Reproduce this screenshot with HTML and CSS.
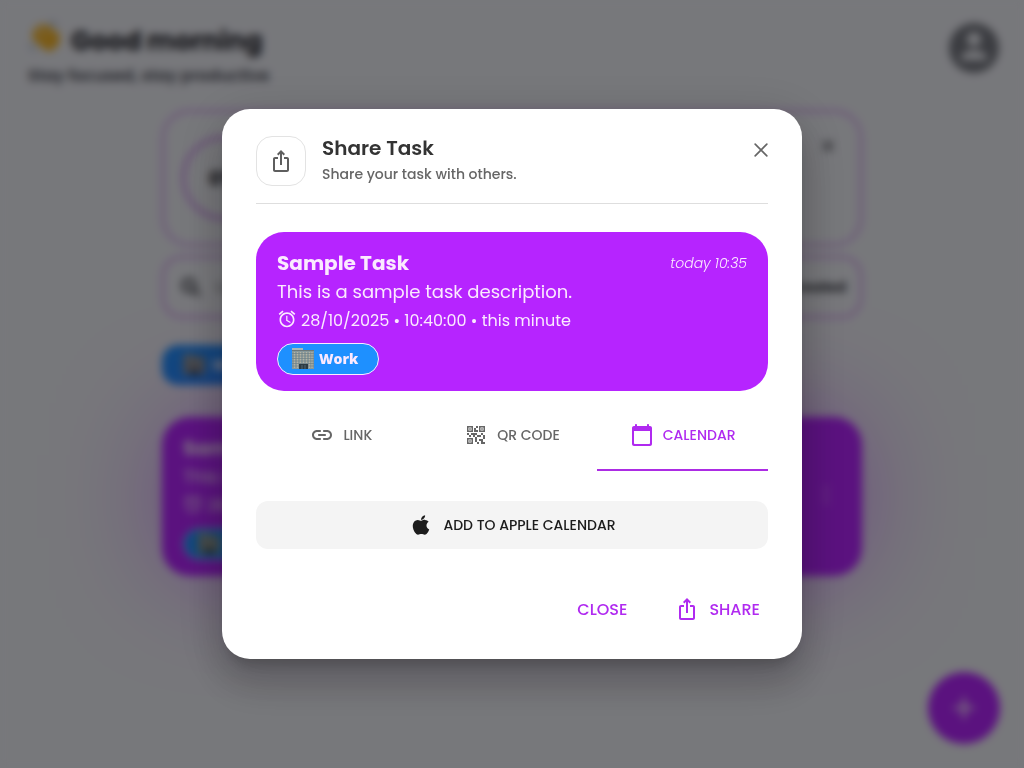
FILE: index.html
```html
<!DOCTYPE html>
<html lang="en">
<head>
<meta charset="utf-8">
<meta name="viewport" content="width=device-width, initial-scale=1">
<title>Share Task</title>
<link rel="stylesheet" href="styles.css">
</head>
<body>
<svg class="sprite" aria-hidden="true">
  <symbol id="i-share" viewBox="0 0 24 24"><path d="M16 5l-1.42 1.42-1.59-1.59V16h-1.98V4.83L9.42 6.42 8 5l4-4 4 4zm4 5v11c0 1.1-.9 2-2 2H6c-1.11 0-2-.9-2-2V10c0-1.11.89-2 2-2h3v2H6v11h12V10h-3V8h3c1.1 0 2 .89 2 2z"/></symbol>
  <symbol id="i-alarm" viewBox="0 0 24 24"><path d="M22 5.72l-4.6-3.86-1.29 1.53 4.6 3.86L22 5.72zM7.88 3.39L6.6 1.86 2 5.71l1.29 1.53 4.59-3.85zM12.5 8H11v6l4.75 2.85.75-1.23-4-2.37V8zM12 4c-4.97 0-9 4.03-9 9s4.02 9 9 9c4.97 0 9-4.03 9-9s-4.03-9-9-9zm0 16c-3.87 0-7-3.13-7-7s3.13-7 7-7 7 3.13 7 7-3.13 7-7 7z"/></symbol>
  <symbol id="i-office" viewBox="0 0 24 24">
    <path fill="#87989b" d="M1 3h22v19H1z"/>
    <path fill="#a9b8ba" d="M1 1h11v3H1z"/>
    <path fill="#6d7779" d="M1 3h22v1H1z"/>
    <path stroke="#b5b3a4" stroke-width="1.2" d="M3.500 5v16M6.500 5v16M9.500 5v11M12.500 5v11M15.500 5v11M18.500 5v16M21 5v16"/>
    <path stroke="#6f8085" stroke-width=".7" d="M1 6.500h22M1 9h22M1 11.500h22M1 14h22M1 16.500h22M1 19h22"/>
    <path fill="#2d3b42" d="M8 17h9v5H8z"/>
    <path stroke="#607d8b" stroke-width=".7" d="M11 18v4M14 18v4"/>
  </symbol>
</svg>

<div class="app">
  <header class="greeting">
    <div>
      <h1 class="greeting-title">
        <svg class="wave" viewBox="0 0 32 32" aria-hidden="true"><g fill="none" stroke="#f5b52c" stroke-width="5" stroke-linecap="round"><path d="M7 10l11 12M12 6l10 12M19 7l6 10M6 16l10 9M27 13v9"/></g><path fill="#f5b52c" d="M14 16l13-2v9q-3 8-9 6l-8-7z"/><path fill="none" stroke="#7f98b8" stroke-width="1.500" stroke-linecap="round" d="M2 23q1 4 5 5M20 2q5 0 7 4"/></svg>
        Good morning
      </h1>
      <p class="greeting-sub">Stay focused, stay productive</p>
    </div>
    <svg class="avatar" viewBox="0 0 24 24" aria-hidden="true"><circle class="avatar-disk" cx="12" cy="12" r="10"/><circle class="avatar-person" cx="12" cy="8.500" r="2.800"/><path class="avatar-person" d="M6.600 16.800c0-2.800 3.600-3.900 5.400-3.900s5.400 1.100 5.400 3.900z"/></svg>
  </header>
  <main class="feed">
    <section class="panel progress">
      <span class="ring">0%</span>
      <svg class="panel-x" viewBox="0 0 16 16" aria-hidden="true"><path d="M3 3l10 10M13 3L3 13"/></svg>
    </section>
    <section class="panel search">
      <svg class="search-icon" viewBox="0 0 24 24" aria-hidden="true"><path d="M15 15l5 5M10 5a5 5 0 1 0 0 11 5 5 0 0 0 0-11z"/></svg>
      <span class="search-hint">Search</span>
      <span class="sort">Date Created</span>
    </section>
    <div class="filter"><svg class="office"><use href="#i-office"/></svg>Work</div>
    <article class="task task-back">
      <div class="task-head"><h3 class="task-title">Sample Task</h3></div>
      <p class="task-text">This is a sample task description.</p>
      <p class="task-due"><svg class="alarm"><use href="#i-alarm"/></svg>28/10/2025 • 10:40:00</p>
      <span class="chip"><svg class="office"><use href="#i-office"/></svg>Work</span>
      <svg class="more" viewBox="0 0 24 24" aria-hidden="true"><circle cx="12" cy="5" r="2"/><circle cx="12" cy="12" r="2"/><circle cx="12" cy="19" r="2"/></svg>
    </article>
  </main>
  <div class="fab"><svg viewBox="0 0 24 24" aria-hidden="true"><path d="M12 4v16M4 12h16"/></svg></div>
</div>

<div class="overlay">
  <section class="dialog" role="dialog" aria-modal="true" aria-labelledby="dlg-title">
    <header class="dialog-head">
      <span class="head-icon"><svg class="icon"><use href="#i-share"/></svg></span>
      <div class="head-text">
        <h2 class="dialog-title" id="dlg-title">Share Task</h2>
        <p class="dialog-sub">Share your task with others.</p>
      </div>
      <button class="close-x" type="button" aria-label="Close dialog"><svg viewBox="0 0 24 24"><path d="M5 5l14 14M19 5L5 19"/></svg></button>
    </header>

    <article class="task">
      <div class="task-head">
        <h3 class="task-title">Sample Task</h3>
        <time class="task-time">today 10:35</time>
      </div>
      <p class="task-text">This is a sample task description.</p>
      <p class="task-due"><svg class="alarm"><use href="#i-alarm"/></svg>28/10/2025 • 10:40:00 • this minute</p>
      <span class="chip"><svg class="office"><use href="#i-office"/></svg>Work</span>
    </article>

    <div class="tabs" role="tablist">
      <button class="tab" type="button" role="tab" aria-selected="false"><svg class="icon" viewBox="0 0 24 24"><path d="M17 7h-3c-.55 0-1 .45-1 1s.45 1 1 1h3c1.65 0 3 1.35 3 3s-1.35 3-3 3h-3c-.55 0-1 .45-1 1s.45 1 1 1h3c2.760 0 5-2.240 5-5s-2.240-5-5-5zm-9 5c0 .55.45 1 1 1h6c.55 0 1-.45 1-1s-.45-1-1-1H9c-.55 0-1 .45-1 1zm2 3H7c-1.650 0-3-1.350-3-3s1.350-3 3-3h3c.55 0 1-.45 1-1s-.45-1-1-1H7c-2.760 0-5 2.240-5 5s2.240 5 5 5h3c.55 0 1-.45 1-1s-.45-1-1-1z"/></svg>LINK</button>
      <button class="tab" type="button" role="tab" aria-selected="false"><svg class="icon" viewBox="0 0 24 24"><path d="M15 21h-2v-2h2v2zm-2-7h-2v5h2v-5zm8-2h-2v4h2v-4zm-2-2h-2v2h2v-2zM7 12H5v2h2v-2zm-2-2H3v2h2v-2zm7-5h2V3h-2v2zM4.500 4.500v3h3v-3h-3zM9 9H3V3h6v6zm-4.500 7.500v3h3v-3h-3zM9 21H3v-6h6v6zm7.500-16.500v3h3v-3h-3zM21 9h-6V3h6v6zm-2 10v-3h-4v2h2v3h4v-2h-2zm-2-7h-4v2h4v-2zm-4-2H7v2h2v2h2v-2h2v-2zm1-1V7h-2V5h-2v4h4zM6.750 5.250h-1.500v1.500h1.500v-1.500zm0 12h-1.500v1.500h1.500v-1.500zm12-12h-1.500v1.500h1.500v-1.500z"/></svg>QR CODE</button>
      <button class="tab tab-active" type="button" role="tab" aria-selected="true"><svg class="icon" viewBox="0 0 24 24"><path d="M20 3h-1V2c0-.55-.45-1-1-1s-1 .45-1 1v1H7V2c0-.55-.45-1-1-1s-1 .45-1 1v1H4c-1.100 0-2 .9-2 2v16c0 1.100.9 2 2 2h16c1.100 0 2-.9 2-2V5c0-1.100-.9-2-2-2zm-1 18H5c-.55 0-1-.45-1-1V8h16v12c0 .55-.45 1-1 1z"/></svg>CALENDAR</button>
    </div>

    <button class="apple" type="button"><svg class="icon apple-mark" viewBox="0 0 24 24"><path d="M17.050 20.280c-.98.95-2.050.8-3.080.35-1.090-.46-2.090-.48-3.240 0-1.440.62-2.200.44-3.060-.35C2.790 15.250 3.510 7.590 9.050 7.310c1.350.07 2.290.74 3.080.8 1.180-.24 2.310-.93 3.570-.84 1.510.12 2.650.72 3.400 1.800-3.120 1.870-2.380 5.980.48 7.130-.57 1.500-1.310 2.990-2.540 4.090l.01-.01zM12.030 7.250c-.15-2.230 1.660-4.070 3.740-4.250.29 2.580-2.340 4.500-3.740 4.250z"/></svg>ADD TO APPLE CALENDAR</button>

    <footer class="actions">
      <button class="action" type="button">CLOSE</button>
      <button class="action" type="button"><svg class="icon"><use href="#i-share"/></svg>SHARE</button>
    </footer>
  </section>
</div>
</body>
</html>
```
FILE: styles.css
```css
* { box-sizing: border-box; }

:root {
  --purple: #b624ff;
  --blue: #1e90ff;
}

body {
  margin: 0;
  min-height: 100vh;
  background: #eff0f7;
  color: #22232b;
  font-family: Poppins, Inter, "Open Sans", sans-serif;
}

h1, h2, h3, p { margin: 0; }
button { border: 0; padding: 0; background: none; font: inherit; cursor: pointer; }
svg { flex: none; fill: currentColor; }

.sprite { position: absolute; width: 0; height: 0; }
.icon { width: 24px; height: 24px; }

/* Page behind the dialog */
.app { min-height: 100vh; overflow: hidden; }
.greeting {
  display: flex;
  justify-content: space-between;
  align-items: flex-start;
  padding: 20px 20px 0 28px;
  height: 110px;
}
.greeting-title {
  display: flex;
  align-items: center;
  gap: 9px;
  font-size: 26px;
  line-height: 40px;
  font-weight: 700;
}
.wave { width: 34px; height: 34px; margin-bottom: 8px; }
.greeting-sub { font-size: 16px; line-height: 28px; font-weight: 600; color: #484a55; }
.avatar { width: 60px; height: 60px; margin-top: -2px; }
.avatar-disk { fill: #777982; }
.avatar-person { fill: #eff0f7; }

.feed { max-width: 700px; margin: 0 auto; }
.panel {
  display: flex;
  align-items: center;
  border: 2px solid #ca82ee;
  border-radius: 28px;
}
.progress { height: 136px; padding: 0 18px; justify-content: space-between; }
.ring {
  display: grid;
  place-items: center;
  width: 84px;
  height: 84px;
  border: 3px solid #ca82ee;
  border-radius: 50%;
  font-size: 20px;
  font-weight: 700;
}
.panel-x { width: 16px; height: 16px; margin: 0 6px 64px 0; stroke: #4c4d55; stroke-width: 2; }
.search { height: 62px; margin-top: 10px; padding: 0 14px; gap: 10px; border-radius: 20px; }
.search-icon { width: 26px; height: 26px; fill: none; stroke: #4c4d55; stroke-width: 3; }
.search-hint { color: #9b9ca5; font-size: 16px; }
.sort { margin-left: auto; font-size: 14px; font-weight: 600; }
.filter {
  display: inline-flex;
  align-items: center;
  gap: 6px;
  height: 40px;
  margin: 27px 0 32px;
  padding: 0 20px;
  border-radius: 16px;
  background: var(--blue);
  color: #fff;
  font-size: 14px;
  font-weight: 700;
  vertical-align: top;
}
.task-back { position: relative; box-shadow: 0 0 128px -28px var(--purple); }
.more { position: absolute; right: 24px; top: 66px; width: 24px; height: 24px; opacity: .5; }
.fab {
  position: fixed;
  right: 24px;
  bottom: 24px;
  display: grid;
  place-items: center;
  width: 72px;
  height: 72px;
  border-radius: 50%;
  background: var(--purple);
}
.fab svg { width: 32px; height: 32px; stroke: #fff; stroke-width: 2; }

/* Dialog */
.overlay {
  position: fixed;
  inset: 0;
  display: grid;
  place-items: center;
  padding: 16px;
  background: rgba(0, 0, 0, .5);
  backdrop-filter: blur(4px);
}
.dialog {
  width: 100%;
  max-width: 580px;
  padding: 27px 34px 26px;
  border-radius: 28px;
  background: #fff;
  box-shadow: 0 11px 15px -7px rgba(0, 0, 0, .2), 0 24px 38px 3px rgba(0, 0, 0, .14), 0 9px 46px 8px rgba(0, 0, 0, .12);
}
.dialog-head {
  display: flex;
  align-items: flex-start;
  gap: 16px;
  padding-bottom: 17px;
  border-bottom: 1px solid #dedede;
}
.head-icon {
  display: grid;
  place-items: center;
  width: 50px;
  height: 50px;
  border: 1px solid #e3e3e3;
  border-radius: 16px;
  color: #5e5e5e;
}
.head-text { flex: 1; }
.dialog-title { font-size: 20px; line-height: 24px; font-weight: 600; color: #333; }
.dialog-sub { margin-top: 4px; font-size: 14px; line-height: 20px; font-weight: 500; color: #666; }
.close-x { width: 20px; height: 20px; margin: 4px -3px 0 0; color: #666; }
.close-x svg { display: block; width: 20px; height: 20px; stroke: currentColor; stroke-width: 2; stroke-linecap: round; }

.task {
  padding: 17px 21px 16px;
  border-radius: 28px;
  background: var(--purple);
  color: #fbe9ff;
}
.dialog .task { margin-top: 28px; }
.task-head { display: flex; justify-content: space-between; align-items: center; }
.task-title { font-size: 20px; line-height: 28px; font-weight: 700; }
.task-time { font-size: 14px; font-weight: 300; font-style: italic; }
.task-text { font-size: 18px; line-height: 29px; }
.task-due { display: flex; align-items: center; gap: 4px; font-size: 16px; line-height: 30px; }
.alarm { width: 20px; height: 20px; margin-bottom: 4px; }
.chip {
  display: inline-flex;
  align-items: center;
  gap: 4px;
  height: 32px;
  margin-top: 7px;
  padding: 0 20px 0 13px;
  border: 1px solid #fbe9ff;
  border-radius: 16px;
  background: var(--blue);
  font: 800 14px/20px "Open Sans", "Noto Sans", sans-serif;
  vertical-align: top;
}
.office { width: 24px; height: 24px; }

.tabs { display: grid; grid-template-columns: repeat(3, 1fr); margin-top: 8px; }
.tab {
  display: flex;
  align-items: center;
  justify-content: center;
  gap: 9px;
  height: 72px;
  border-bottom: 2px solid transparent;
  padding-top: 2px;
  color: #666;
  font-size: 14px;
  font-weight: 500;
}
.tab-active { border-color: #ac2ce4; color: #b02af0; }

.apple {
  display: flex;
  align-items: center;
  justify-content: center;
  gap: 9px;
  width: 100%;
  height: 48px;
  margin-top: 30px;
  border-radius: 12px;
  background: #f4f4f4;
  color: #1c1c1c;
  font-size: 14px;
  font-weight: 500;
}
.apple-mark { width: 26px; height: 26px; }

.actions { display: flex; justify-content: flex-end; gap: 32px; margin-top: 36px; }
.action {
  display: flex;
  align-items: center;
  gap: 10px;
  height: 48px;
  padding: 0 8px;
  color: #b02af0;
  font-size: 16px;
  font-weight: 500;
}
```
